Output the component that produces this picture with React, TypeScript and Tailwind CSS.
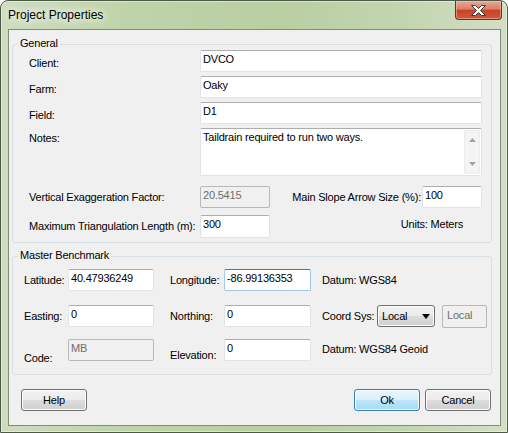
import React from "react";

const FONT = { fontFamily: '"Liberation Sans", Arial, sans-serif' };

function Box({
  value,
  className = "",
  disabled = false,
  focused = false,
}: {
  value?: string;
  className?: string;
  disabled?: boolean;
  focused?: boolean;
}) {
  let look = "bg-white border-[#e2e3ea] border-t-[#abadb3] text-black";
  if (disabled) look = "bg-[#f0f0f0] border-[#b5b8bc] text-[#6d6d6d]";
  if (focused) look = "bg-white border-[#a4c9e3] border-t-[#3d7bad] text-black";
  return (
    <div
      className={`shrink-0 border rounded-[2px] pl-[2px] pt-[2px] leading-[13px] whitespace-nowrap overflow-hidden ${look} ${className}`}
    >
      {value}
    </div>
  );
}

function Btn({ label, def = false, className = "" }: { label: string; def?: boolean; className?: string }) {
  const look = def
    ? "border-[#3c7fb1] bg-[linear-gradient(180deg,#eaf6fd_0%,#d9f0fc_50%,#bee6fd_50%,#a7d9f5_100%)] shadow-[inset_0_0_0_1px_#f4fbfe]"
    : "border-[#707070] bg-[linear-gradient(180deg,#f2f2f2_0%,#ebebeb_50%,#dddddd_50%,#cfcfcf_100%)] shadow-[inset_0_0_0_1px_#fcfcfc]";
  return (
    <div
      className={`h-[22px] flex items-center justify-center border rounded-[3px] text-black leading-[13px] ${look} ${className}`}
    >
      {label}
    </div>
  );
}

function Group({ title, className = "", children }: { title: string; className?: string; children: React.ReactNode }) {
  return (
    <div className={`relative border border-[#d5dfe5] rounded-[3px] ml-[3px] w-[480px] ${className}`}>
      <span className="absolute -top-[8px] left-[5px] px-[2px] bg-[#f0f0f0] leading-[13px]">{title}</span>
      {children}
    </div>
  );
}

export default function App() {
  return (
    <div
      style={FONT}
      className="w-[508px] h-[433px] flex flex-col rounded-t-[8px] border border-[#4b5a47] bg-[linear-gradient(90deg,#cfdcc0_0%,#bfd3a9_25%,#b9cea1_55%,#c3d5b0_80%,#d3dfc5_100%)] shadow-[inset_0_0_0_1px_rgba(255,255,255,0.45)] text-[11px] tracking-[-0.2px] text-black overflow-hidden"
    >
      {/* title bar */}
      <div className="h-[28px] flex items-start shrink-0">
        <span className="ml-[7px] mt-[7px] text-[12px] tracking-normal leading-[14px] text-black [text-shadow:0_0_6px_#eef4e6,0_0_10px_#eef4e6,0_0_14px_#eef4e6]">
          Project Properties
        </span>
        <div className="ml-auto mr-[5px] w-[47px] h-[19px] flex items-center justify-center border border-t-0 border-[#6b3326] rounded-b-[4px] bg-[linear-gradient(180deg,#e8a796_0%,#db7e67_45%,#c6432a_52%,#cf5a3d_100%)] shadow-[inset_0_0_0_1px_rgba(255,210,190,0.45)]">
          <svg width="15" height="11" viewBox="0 0 15 11">
            <polygon
              points="0.5,0.5 4.5,0.5 7.5,3.5 10.5,0.5 14.5,0.5 9.5,5.5 14.5,10.5 10.5,10.5 7.5,7.5 4.5,10.5 0.5,10.5 5.5,5.5"
              fill="#ffffff"
              stroke="#3a3a3a"
              strokeWidth="1"
              strokeLinejoin="round"
            />
          </svg>
        </div>
      </div>

      {/* client area */}
      <div className="flex-1 ml-[7px] mr-[6px] mb-[6px] border border-[#7f8d79] bg-[#f0f0f0] flex flex-col">
        <Group title="General" className="mt-[14px] pt-[5px] pb-[4px] pl-[16px]">
          <div className="flex items-center h-[22px]">
            <span className="w-[171px] shrink-0 pt-[4px]">Client:</span>
            <Box value="DVCO" className="w-[282px] h-[22px]" />
          </div>
          <div className="flex items-center h-[22px] mt-[4px]">
            <span className="w-[171px] shrink-0 pt-[4px]">Farm:</span>
            <Box value="Oaky" className="w-[282px] h-[22px]" />
          </div>
          <div className="flex items-center h-[22px] mt-[4px]">
            <span className="w-[171px] shrink-0 pt-[4px]">Field:</span>
            <Box value="D1" className="w-[282px] h-[22px]" />
          </div>
          <div className="flex items-start h-[48px] mt-[4px]">
            <span className="w-[171px] shrink-0 pt-[4px] leading-[13px]">Notes:</span>
            <div className="w-[282px] h-[48px] flex border rounded-[2px] bg-white border-[#e2e3ea] border-t-[#abadb3]">
              <div className="flex-1 pl-[2px] pt-[2px] leading-[13px] whitespace-nowrap">
                Taildrain required to run two ways.
              </div>
              <div className="w-[16px] my-[1px] mr-[1px] bg-[#f4f4f4] border border-[#ececec] rounded-[2px] flex flex-col items-center justify-between py-[7px]">
                <svg width="7" height="4" viewBox="0 0 7 4">
                  <polygon points="3.5,0 7,4 0,4" fill="#a3a3a3" />
                </svg>
                <svg width="7" height="4" viewBox="0 0 7 4">
                  <polygon points="0,0 7,0 3.5,4" fill="#a3a3a3" />
                </svg>
              </div>
            </div>
          </div>
          <div className="flex items-center h-[22px] mt-[10px] w-[453px]">
            <span className="w-[171px] shrink-0">Vertical Exaggeration Factor:</span>
            <Box value="20.5415" disabled className="w-[70px] h-[22px]" />
            <div className="ml-auto flex items-center">
              <span className="whitespace-nowrap mr-[1px]">Main Slope Arrow Size (%):</span>
              <Box value="100" className="w-[60px] h-[22px]" />
            </div>
          </div>
          <div className="flex items-center h-[23px] mt-[7px] w-[453px]">
            <span className="w-[171px] shrink-0 whitespace-nowrap">Maximum Triangulation Length (m):</span>
            <Box value="300" className="w-[70px] h-[23px]" />
            <span className="ml-auto mr-[19px] -mt-[4px] whitespace-nowrap">Units: Meters</span>
          </div>
        </Group>

        <Group title="Master Benchmark" className="mt-[13px] pt-[12px] pb-[13px] pl-[11px]">
          <div className="flex items-center h-[22px]">
            <span className="w-[44px] shrink-0">Latitude:</span>
            <Box value="40.47936249" className="w-[86px] h-[22px]" />
            <span className="ml-[16px] w-[54px] shrink-0">Longitude:</span>
            <Box value="-86.99136353" focused className="w-[87px] h-[22px]" />
            <span className="ml-[11px] whitespace-nowrap">Datum: WGS84</span>
          </div>
          <div className="flex items-center h-[22px] mt-[14px]">
            <span className="w-[44px] shrink-0">Easting:</span>
            <Box value="0" className="w-[86px] h-[22px]" />
            <span className="ml-[16px] w-[54px] shrink-0">Northing:</span>
            <Box value="0" className="w-[87px] h-[22px]" />
            <span className="ml-[11px] w-[55px] shrink-0 whitespace-nowrap">Coord Sys:</span>
            <div className="w-[58px] h-[22px] flex items-center border border-[#707070] rounded-[3px] pl-[4px] pr-[4px] bg-[linear-gradient(180deg,#f2f2f2_0%,#ebebeb_50%,#dddddd_50%,#cfcfcf_100%)] shadow-[inset_0_0_0_1px_#fcfcfc] leading-[13px]">
              <span>Local</span>
              <svg className="ml-auto" width="8" height="5" viewBox="0 0 8 5">
                <polygon points="0,0 8,0 4,5" fill="#000000" />
              </svg>
            </div>
            <div className="ml-[7px] w-[45px] h-[23px] border border-[#b5b8bc] rounded-[2px] pl-[4px] pt-[3px] leading-[13px] text-[#6d6d6d]">
              Local
            </div>
          </div>
          <div className="flex items-start h-[22px] mt-[12px]">
            <span className="w-[44px] shrink-0 pt-[13px] leading-[13px]">Code:</span>
            <Box value="MB" disabled className="w-[86px] h-[22px]" />
            <span className="ml-[16px] w-[54px] shrink-0 pt-[10px] leading-[13px]">Elevation:</span>
            <Box value="0" className="w-[87px] h-[22px]" />
            <span className="ml-[11px] pt-[4px] leading-[13px] whitespace-nowrap">Datum: WGS84 Geoid</span>
          </div>
        </Group>

        <div className="flex items-center mt-[14px] ml-[12px] mr-[9px]">
          <Btn label="Help" className="w-[66px]" />
          <Btn label="Ok" def className="ml-auto w-[66px]" />
          <Btn label="Cancel" className="ml-[5px] w-[66px]" />
        </div>
      </div>
    </div>
  );
}
